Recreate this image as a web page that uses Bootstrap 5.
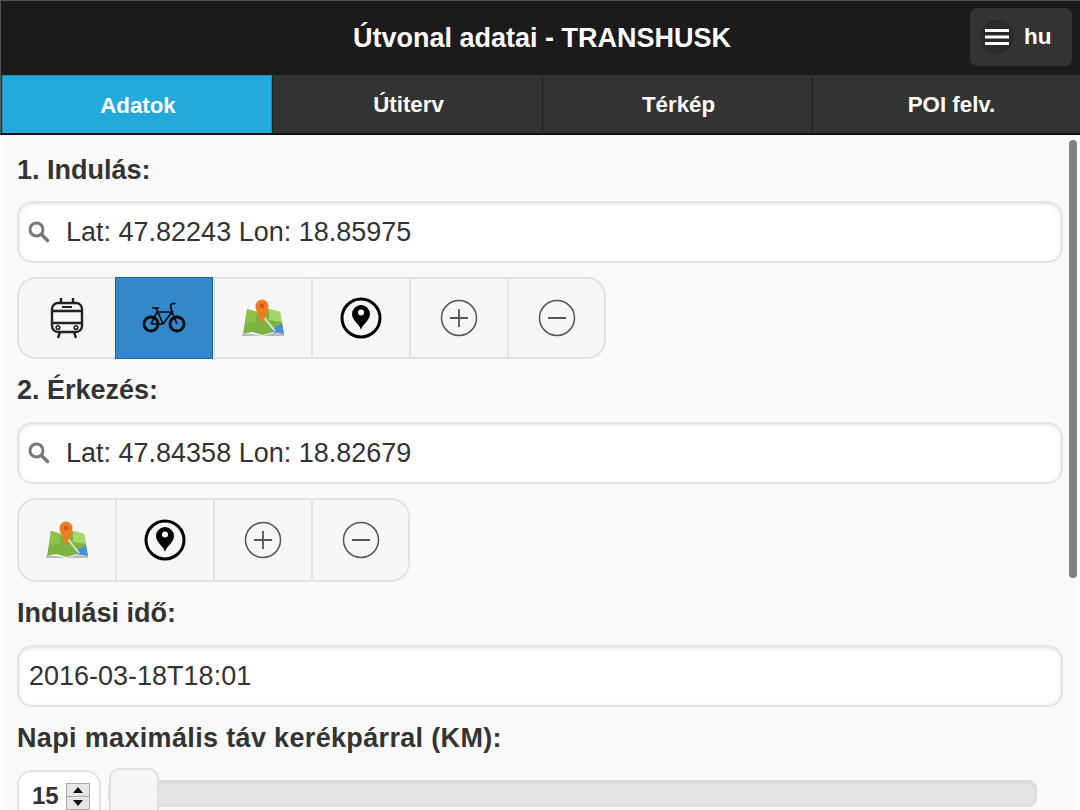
<!DOCTYPE html>
<html lang="hu">
<head>
  <meta charset="UTF-8" />
  <meta name="viewport" content="width=device-width, initial-scale=1.0"/>
  <title>Útvonal adatai - TRANSHUSK</title>
  <link href="https://cdn.jsdelivr.net/npm/bootstrap@5.3.0/dist/css/bootstrap.min.css" rel="stylesheet" />
  <style>
    html, body { height: 810px; overflow: hidden; }
    body {
      background-color: #f9f9f9;
      font-family: "Liberation Sans", Arial, sans-serif;
      color: #333;
      position: relative;
    }

    .top-bar {
      height: 75px;
      background-color: #1b1b1b;
      border-top: 1px solid #555;
      border-left: 1px solid #555;
      position: relative;
      padding-left: 3px;
    }
    .top-title {
      font-size: 27px;
      font-weight: 700;
      color: #fff;
      line-height: 1;
      margin: 0;
    }
    .lang-btn {
      position: absolute;
      top: 7px;
      right: 8px;
      width: 102px;
      height: 58px;
      background-color: #333;
      border-radius: 7px;
      color: #fff;
      font-size: 22.5px;
      font-weight: 700;
    }
    .lang-ring {
      width: 34px;
      height: 34px;
      border-radius: 50%;
      background-color: #2b2b2b;
      margin-left: 10px;
      margin-right: 10px;
    }

    .tab-row {
      height: 60px;
      background-color: #333;
      border-left: 1px solid #555;
      border-bottom: 2px solid #111;
    }
    .tab-cell {
      flex: 0 0 270px;
      font-size: 22.3px;
      font-weight: 700;
      color: #fff;
      text-decoration: none;
      border-left: 1px solid #1f1f1f;
      padding: 2px 0 0 2px;
    }
    .tab-cell:last-child { flex: 1 1 0; padding-left: 10px; }
    .tab-cell.tab-on {
      background-color: #22aadd;
      border: 1px solid #1d8bb5;
      border-bottom: 0;
      margin-left: 1px;
    }

    .form-area {
      padding: 0 14px;
      border-left: 3px solid #fcfcfc;
      border-right: 3px solid #fcfcfc;
      height: 675px;
      overflow: hidden;
    }
    .field-label {
      display: block;
      font-size: 27px;
      font-weight: 700;
      line-height: 30px;
      color: #333;
      margin: 16px 0 17px;
    }
    .field-label.first-label { margin-top: 20px; margin-bottom: 16px; }
    .field-label.wide-label { letter-spacing: .34px; }
    .text-box {
      height: 62px;
      font-size: 27px;
      color: #333;
      background-color: #fff;
      border: 2px solid #e4e4e4;
      border-radius: 15px;
      box-shadow: inset 0 1px 4px rgba(0, 0, 0, .12);
      padding: 0 10px;
    }
    .text-box.with-search { padding-left: 47px; }
    .search-wrap { position: relative; }
    .search-glyph {
      position: absolute;
      left: 10px;
      top: 19px;
    }

    .tool-group {
      display: flex;
      width: fit-content;
      margin-top: 14px;
      height: 82px;
      background-color: #f6f6f6;
      box-shadow: inset 0 0 0 2px #e2e2e2;
      border-radius: 19px;
      overflow: hidden;
    }
    .tool-group.tall-group { height: 84px; }
    .tool-btn {
      width: 98px;
      padding: 0;
      background: transparent;
      border: 0;
      border-left: 2px solid #e2e2e2;
      border-radius: 0;
    }
    .tool-btn:first-child { border-left: 0; padding-left: 2px; }
    .tool-btn:last-child { width: 99px; padding-right: 2px; }
    .tool-btn.tool-on {
      background-color: #3388cc;
      border: 1px solid #1f6399;
    }

    .num-box {
      width: 84px;
      height: 50px;
      background-color: #fff;
      border: 2px solid #e2e2e2;
      border-bottom: 0;
      border-radius: 15px 15px 0 0;
      font-size: 24px;
      font-weight: 700;
      color: #333;
      padding-left: 13px;
    }
    .spin-arrows {
      width: 24px;
      height: 27px;
      margin-left: 7px;
      margin-top: 1px;
    }
    .slider-track {
      position: relative;
      flex: 1 1 auto;
      height: 27px;
      margin: 10px 26px 0 7px;
      background-color: #e6e6e6;
      border: 1px solid #dcdcdc;
      border-radius: 8px;
      box-shadow: inset 0 1px 4px rgba(0, 0, 0, .1);
    }
    .slider-thumb {
      position: absolute;
      left: 0;
      top: -13px;
      width: 50px;
      height: 60px;
      background-color: #f6f6f6;
      border: 2px solid #e0e0e0;
      border-radius: 10px;
    }
    .scroll-thumb {
      position: absolute;
      top: 140px;
      right: 3px;
      width: 8px;
      height: 438px;
      background-color: #808080;
      border-radius: 4px;
    }
  </style>
</head>
<body>

<header class="top-bar d-flex align-items-center justify-content-center">
  <h1 class="top-title">Útvonal adatai - TRANSHUSK</h1>
  <a class="lang-btn d-flex align-items-center text-decoration-none" href="#">
    <span class="lang-ring d-flex align-items-center justify-content-center">
      <svg width="24" height="18" viewBox="0 0 24 18"><path d="M0 2.5h24M0 9h24M0 15.5h24" stroke="#fff" stroke-width="3"/></svg>
    </span>
    hu
  </a>
</header>

<nav class="tab-row d-flex">
  <a class="tab-cell tab-on d-flex align-items-center justify-content-center" href="#">Adatok</a>
  <a class="tab-cell d-flex align-items-center justify-content-center" href="#">Útiterv</a>
  <a class="tab-cell d-flex align-items-center justify-content-center" href="#">Térkép</a>
  <a class="tab-cell d-flex align-items-center justify-content-center" href="#">POI felv.</a>
</nav>

<main class="form-area">
  <!-- shared icons -->
  <svg width="0" height="0" class="position-absolute">
    <defs>
      <symbol id="ico-map" viewBox="0 0 44 38">
        <path d="M2 35L6 10l10 3 12-3 11 3 4 22-11-2-10 3-11-3z" fill="#7cb342"/>
        <path d="M28 10l11 3 2 10-13-2z" fill="#a5d66a"/>
        <path d="M6 10l10 3-2 10-10 1z" fill="#8fc04a"/>
        <path d="M30 31l11-7 2 11-11-2z" fill="#4a90d9"/>
        <path d="M1 35l10 0 10 2 11-3 11 1v2H1z" fill="#bbb"/>
        <path d="M16 13l6 4 12 15" fill="none" stroke="#d9e8b8" stroke-width="2"/>
        <path d="M21 25C18 17 14.500 12 14.500 7a6.500 6.500 0 0 1 13 0c0 5-3.500 10-6.500 18z" fill="#ee7d22"/>
        <circle cx="21" cy="7" r="2.400" fill="#d9541e"/>
      </symbol>
      <symbol id="ico-pin" viewBox="0 0 42 42">
        <circle cx="21" cy="21" r="19" fill="none" stroke="#000" stroke-width="3"/>
        <path d="M21 33c-1-6-9-9-9-16a9 9 0 0 1 18 0c0 7-8 10-9 16z" fill="#000"/>
        <circle cx="21" cy="15.500" r="3" fill="#fff"/>
      </symbol>
      <symbol id="ico-plus" viewBox="0 0 38 38">
        <circle cx="19" cy="19" r="17.500" fill="none" stroke="#555" stroke-width="1.500"/>
        <path d="M10 19h18M19 10v18" stroke="#555" stroke-width="1.800"/>
      </symbol>
      <symbol id="ico-minus" viewBox="0 0 38 38">
        <circle cx="19" cy="19" r="17.500" fill="none" stroke="#555" stroke-width="1.500"/>
        <path d="M10 19h18" stroke="#555" stroke-width="2"/>
      </symbol>
      <symbol id="ico-search" viewBox="0 0 24 24">
        <circle cx="9.5" cy="9.5" r="6.5" fill="none" stroke="#777" stroke-width="3"/>
        <path d="M14.500 14.500l6 6" stroke="#777" stroke-width="3.400" stroke-linecap="round"/>
      </symbol>
    </defs>
  </svg>

  <label class="field-label first-label">1. Indulás:</label>
  <div class="search-wrap">
    <svg class="search-glyph" width="24" height="24"><use href="#ico-search"/></svg>
    <input class="form-control text-box with-search" type="text" value="Lat: 47.82243 Lon: 18.85975">
  </div>
  <div class="tool-group">
    <button class="btn tool-btn" type="button">
      <svg width="36" height="42" viewBox="0 0 36 42"><g fill="none" stroke="#222" stroke-width="2.400"><rect x="3" y="6" width="30" height="29" rx="6"/><path d="M3 14h30M3 26h30M12 6V1M24 6V1M11 35l-2 6M25 35l2 6"/><circle cx="9" cy="30.500" r="1.800" stroke-width="1.600"/><circle cx="27" cy="30.500" r="1.800" stroke-width="1.600"/><path d="M13 10h10" stroke-width="2"/></g></svg>
    </button>
    <button class="btn tool-btn tool-on" type="button">
      <svg width="44" height="32" viewBox="0 0 44 32"><g fill="none" stroke="#0c0c0c"><circle cx="9" cy="22" r="7" stroke-width="2.800"/><circle cx="35" cy="22" r="7" stroke-width="2.800"/><path d="M9 22h12L30 10H15L9 22M14 6l7 16M30 10l5 12M30 10l-1.500-6c0-2 3-3 5-2.500M10 6h7" stroke-width="1.700"/></g></svg>
    </button>
    <button class="btn tool-btn" type="button">
      <svg width="44" height="38"><use href="#ico-map"/></svg>
    </button>
    <button class="btn tool-btn" type="button">
      <svg width="42" height="42"><use href="#ico-pin"/></svg>
    </button>
    <button class="btn tool-btn" type="button">
      <svg width="38" height="38"><use href="#ico-plus"/></svg>
    </button>
    <button class="btn tool-btn" type="button">
      <svg width="38" height="38"><use href="#ico-minus"/></svg>
    </button>
  </div>

  <label class="field-label">2. Érkezés:</label>
  <div class="search-wrap">
    <svg class="search-glyph" width="24" height="24"><use href="#ico-search"/></svg>
    <input class="form-control text-box with-search" type="text" value="Lat: 47.84358 Lon: 18.82679">
  </div>
  <div class="tool-group tall-group">
    <button class="btn tool-btn" type="button">
      <svg width="44" height="38"><use href="#ico-map"/></svg>
    </button>
    <button class="btn tool-btn" type="button">
      <svg width="42" height="42"><use href="#ico-pin"/></svg>
    </button>
    <button class="btn tool-btn" type="button">
      <svg width="38" height="38"><use href="#ico-plus"/></svg>
    </button>
    <button class="btn tool-btn" type="button">
      <svg width="38" height="38"><use href="#ico-minus"/></svg>
    </button>
  </div>

  <label class="field-label">Indulási idő:</label>
  <input class="form-control text-box" type="text" value="2016-03-18T18:01">

  <label class="field-label wide-label">Napi maximális táv kerékpárral (KM):</label>
  <div class="d-flex">
    <div class="num-box d-flex align-items-center flex-shrink-0">
      15
      <svg class="spin-arrows" viewBox="0 0 24 27"><rect x=".5" y=".5" width="23" height="26" fill="#e6e6e6" stroke="#aaa"/><path d="M1 13.500h22" stroke="#aaa"/><path d="M12 4l5 6H7zM12 23l5-6H7z" fill="#111"/></svg>
    </div>
    <div class="slider-track">
      <span class="slider-thumb"></span>
    </div>
  </div>
</main>

<span class="scroll-thumb"></span>

<script src="https://cdn.jsdelivr.net/npm/bootstrap@5.3.0/dist/js/bootstrap.bundle.min.js"></script>
</body>
</html>
